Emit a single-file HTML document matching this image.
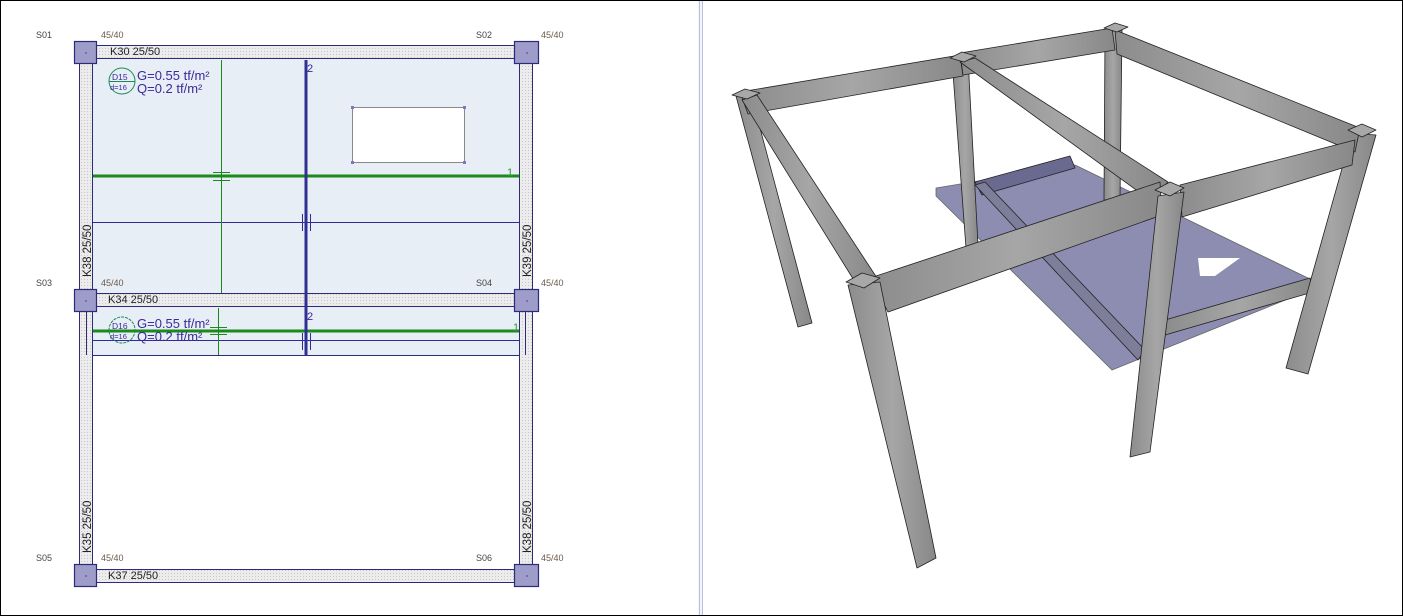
<!DOCTYPE html>
<html><head><meta charset="utf-8"><style>
html,body{margin:0;padding:0;background:#fff;}
svg{display:block;font-family:"Liberation Sans",sans-serif;}
</style></head><body>
<svg width="1403" height="616" viewBox="0 0 1403 616" xmlns="http://www.w3.org/2000/svg">
<defs>
<pattern id="h" width="3" height="3" patternUnits="userSpaceOnUse"><rect width="3" height="3" fill="#ececec"/><rect width="1" height="1" fill="#c8c8c8"/></pattern>
<linearGradient id="c" x1="0" x2="1"><stop offset="0" stop-color="#8c8c8c"/><stop offset="0.5" stop-color="#a6a6a6"/><stop offset="1" stop-color="#888"/></linearGradient>
</defs>
<rect x="0.5" y="0.5" width="1402" height="615" fill="#fff" stroke="#000"/>
<rect x="698" y="1" width="5" height="614" fill="#f4f5fa"/>
<line x1="699.5" y1="1" x2="699.5" y2="615" stroke="#b9c0d8"/>
<line x1="702.5" y1="1" x2="702.5" y2="615" stroke="#b9c0d8"/>

<rect x="93" y="58" width="426" height="235" fill="#e8eef6"/>
<rect x="93" y="306" width="426" height="49" fill="#e8eef6"/>
<line x1="93" y1="355.5" x2="519" y2="355.5" stroke="#2e2a7a"/>
<rect x="352.5" y="107.5" width="112" height="55" fill="#fff" stroke="#888"/>
<g fill="#8a70c0"><rect x="351" y="106" width="3" height="3"/><rect x="463" y="106" width="3" height="3"/><rect x="351" y="161" width="3" height="3"/><rect x="463" y="161" width="3" height="3"/></g>

<g fill="url(#h)" stroke="#2e2a7a" stroke-width="1">
<rect x="96.5" y="45.5" width="418" height="13"/>
<rect x="96.5" y="293.5" width="418" height="13"/>
<rect x="96.5" y="569.5" width="418" height="13"/>
<rect x="79.5" y="63.5" width="13" height="226"/>
<rect x="519.5" y="63.5" width="13" height="226"/>
<rect x="79.5" y="311.5" width="13" height="253"/>
<rect x="519.5" y="311.5" width="13" height="253"/>
</g>
<g stroke="#2e2a7a"><line x1="86.5" y1="311" x2="86.5" y2="355"/><line x1="525.5" y1="311" x2="525.5" y2="355"/></g>
<g fill="#9e9cc8" stroke="#2e2a7a" stroke-width="1.2">
<rect x="74.5" y="41.5" width="22" height="22"/><rect x="514.5" y="41.5" width="24" height="22"/>
<rect x="74.5" y="289.5" width="22" height="22"/><rect x="514.5" y="289.5" width="24" height="22"/>
<rect x="74.5" y="564.5" width="22" height="22"/><rect x="514.5" y="564.5" width="24" height="22"/>
</g>
<g fill="#8a60c0"><rect x="85" y="52" width="2" height="2"/><rect x="526" y="52" width="2" height="2"/><rect x="85" y="300" width="2" height="2"/><rect x="526" y="300" width="2" height="2"/><rect x="85" y="575" width="2" height="2"/><rect x="526" y="575" width="2" height="2"/></g>

<line x1="93" y1="176" x2="519" y2="176" stroke="#1a8a1a" stroke-width="3"/>
<line x1="93" y1="331" x2="519" y2="331" stroke="#1a8a1a" stroke-width="3"/>
<line x1="93" y1="222.5" x2="519" y2="222.5" stroke="#2e2a9a"/>
<line x1="93" y1="340.5" x2="519" y2="340.5" stroke="#2e2a9a"/>
<line x1="221.5" y1="60" x2="221.5" y2="293" stroke="#1a8a1a"/>
<line x1="218.5" y1="308" x2="218.5" y2="355" stroke="#1a8a1a"/>
<g stroke="#1a8a1a"><line x1="213" y1="172.5" x2="230" y2="172.5"/><line x1="213" y1="180.5" x2="230" y2="180.5"/><line x1="210" y1="327.5" x2="227" y2="327.5"/><line x1="210" y1="334.5" x2="227" y2="334.5"/></g>
<line x1="306" y1="60" x2="306" y2="356" stroke="#2e3192" stroke-width="3"/>
<g stroke="#2e2a9a"><line x1="302.5" y1="214" x2="302.5" y2="231"/><line x1="310.5" y1="214" x2="310.5" y2="231"/><line x1="302.5" y1="333" x2="302.5" y2="350"/><line x1="310.5" y1="333" x2="310.5" y2="350"/></g>

<circle cx="122" cy="81" r="13" fill="none" stroke="#1a8a5a"/>
<line x1="109" y1="81.5" x2="135" y2="81.5" stroke="#1a8a5a"/>
<circle cx="122" cy="330" r="13" fill="none" stroke="#1a8a5a" stroke-dasharray="3 1"/>

<g font-size="9" fill="#444"><text x="36" y="38">S01</text><text x="476" y="38">S02</text><text x="36" y="286">S03</text><text x="476" y="286">S04</text><text x="36" y="561">S05</text><text x="476" y="561">S06</text></g>
<g font-size="9" fill="#6b5a4a"><text x="101" y="38">45/40</text><text x="541" y="38">45/40</text><text x="101" y="286">45/40</text><text x="541" y="286">45/40</text><text x="101" y="561">45/40</text><text x="541" y="561">45/40</text></g>
<g font-size="11" fill="#222"><text x="110" y="55">K30 25/50</text><text x="108" y="303">K34 25/50</text><text x="108" y="579">K37 25/50</text></g>
<g font-size="11.5" fill="#222">
<text transform="translate(91,277) rotate(-90)">K38 25/50</text>
<text transform="translate(531,277) rotate(-90)">K39 25/50</text>
<text transform="translate(91,553) rotate(-90)">K35 25/50</text>
<text transform="translate(531,553) rotate(-90)">K38 25/50</text>
</g>
<g fill="#3a2a9a"><text x="112" y="80" font-size="8.5">D15</text><text x="110" y="90" font-size="7.5">d=16</text>
<text x="137" y="80" font-size="13">G=0.55  tf/m²</text><text x="137" y="93" font-size="13">Q=0.2  tf/m²</text>
<text x="112" y="329" font-size="8.5">D16</text><text x="110" y="339" font-size="7.5">d=16</text>
<text x="137" y="328" font-size="13">G=0.55  tf/m²</text><text x="137" y="341" font-size="13">Q=0.2  tf/m²</text>
<text x="307" y="72" font-size="11">2</text><text x="307" y="320" font-size="11">2</text></g>
<g fill="#2a9a2a" font-size="11"><text x="507" y="176">1</text><text x="513" y="331">1</text></g>

<g stroke="#222" stroke-width="0.8" stroke-linejoin="round">
<polygon points="936,188 1075,165 1312,280 1310,290 1112,370 936,196" fill="#706f9e" fill-opacity="0.8" stroke="#666"/>
<polygon points="1198,258 1240,258 1215,276 1200,276" fill="#fff" stroke="none"/>
<polygon points="975,182 1070,156 1075,168 982,195" fill="#6a6990"/>
<polygon points="975,185 985,182 1145,350 1138,360" fill="#7e7d9a"/>
<polygon points="1165,320 1310,278 1313,292 1165,335" fill="url(#c)"/>
<polygon points="952,60 968,58 978,245 966,248" fill="url(#c)"/>
<polygon points="1105,32 1122,30 1120,200 1104,200" fill="url(#c)"/>
<polygon points="736,96 752,98 812,323 798,327" fill="url(#c)"/>
<polygon points="1352,133 1376,135 1308,374 1286,368" fill="url(#c)"/>
<polygon points="740,92 960,55 963,76 748,114" fill="url(#c)"/>
<polygon points="960,53 1112,28 1115,50 963,75" fill="url(#c)"/>
<polygon points="1115,30 1360,128 1355,152 1117,54" fill="url(#c)"/>
<polygon points="960,62 975,58 1168,182 1150,200" fill="url(#c)"/>
<polygon points="742,100 757,95 877,278 860,290" fill="url(#c)"/>
<polygon points="870,278 1160,182 1162,215 888,312" fill="url(#c)"/>
<polygon points="1180,185 1355,140 1352,165 1182,217" fill="url(#c)"/>
<polygon points="1158,196 1184,192 1150,452 1130,457" fill="url(#c)"/>
<polygon points="848,285 880,282 936,558 917,568" fill="url(#c)"/>
<polygon points="732,95 745,89 760,93 747,99" fill="#a8a8a8"/>
<polygon points="950,58 962,52 976,56 964,62" fill="#a8a8a8"/>
<polygon points="1104,28 1115,23 1128,27 1117,32" fill="#a8a8a8"/>
<polygon points="1348,130 1362,124 1376,130 1362,137" fill="#a8a8a8"/>
<polygon points="1155,190 1170,182 1184,188 1170,196" fill="#a8a8a8"/>
<polygon points="846,282 862,273 880,278 864,288" fill="#a8a8a8"/>
</g>
</svg>
</body></html>
